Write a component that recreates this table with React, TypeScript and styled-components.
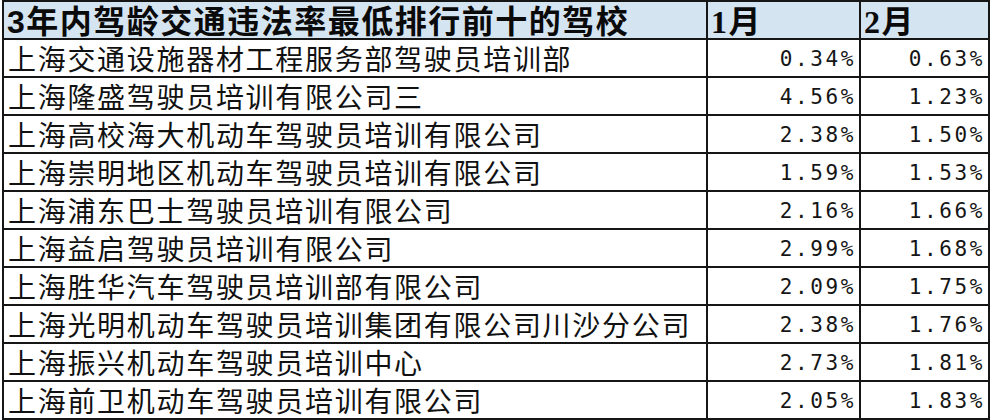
import React from 'react';
import styled, { createGlobalStyle } from 'styled-components';

type Row = { name: string; jan: string; feb: string };

const rows: Row[] = [
  { name: '上海交通设施器材工程服务部驾驶员培训部', jan: '0.34%', feb: '0.63%' },
  { name: '上海隆盛驾驶员培训有限公司三', jan: '4.56%', feb: '1.23%' },
  { name: '上海高校海大机动车驾驶员培训有限公司', jan: '2.38%', feb: '1.50%' },
  { name: '上海崇明地区机动车驾驶员培训有限公司', jan: '1.59%', feb: '1.53%' },
  { name: '上海浦东巴士驾驶员培训有限公司', jan: '2.16%', feb: '1.66%' },
  { name: '上海益启驾驶员培训有限公司', jan: '2.99%', feb: '1.68%' },
  { name: '上海胜华汽车驾驶员培训部有限公司', jan: '2.09%', feb: '1.75%' },
  { name: '上海光明机动车驾驶员培训集团有限公司川沙分公司', jan: '2.38%', feb: '1.76%' },
  { name: '上海振兴机动车驾驶员培训中心', jan: '2.73%', feb: '1.81%' },
  { name: '上海前卫机动车驾驶员培训有限公司', jan: '2.05%', feb: '1.83%' },
];

const App: React.FC = () => {
  return (
    <>
      <GlobalStyle />
      <Sheet>
        <HeadCell>3年内驾龄交通违法率最低排行前十的驾校</HeadCell>
        <HeadCell $serif>1月</HeadCell>
        <HeadCell $serif>2月</HeadCell>
        {rows.map((row) => (
          <React.Fragment key={row.name}>
            <NameCell>{row.name}</NameCell>
            <RateCell>{row.jan}</RateCell>
            <RateCell>{row.feb}</RateCell>
          </React.Fragment>
        ))}
      </Sheet>
    </>
  );
};

export default App;

const GlobalStyle = createGlobalStyle`
  html, body {
    margin: 0;
    padding: 0;
    background: #ffffff;
  }
`;

const Sheet = styled.div`
  display: grid;
  grid-template-columns: 702px 151px 127px;
  grid-auto-rows: 36px;
  gap: 2px;

  width: fit-content;
  margin-left: 2px;
  padding: 2px;

  background: #161616;
`;

const HeadCell = styled.div<{ $serif?: boolean }>`
  display: flex;
  align-items: center;

  padding: 4px 3px 0;

  background: #d5e4f1;
  color: #0a0a0a;
  font-family: ${(p) =>
    p.$serif
      ? '"Liberation Serif", "Noto Sans CJK SC", serif'
      : '"Liberation Sans", "Noto Sans CJK SC", sans-serif'};
  font-size: 32px;
  font-weight: 700;
  line-height: 1;
  letter-spacing: 1.5px;
  white-space: nowrap;
`;

const NameCell = styled.div`
  display: flex;
  align-items: center;

  padding: 0 4px;

  background: #ffffff;
  color: #111111;
  font-family: "Noto Sans CJK SC", sans-serif;
  font-size: 28px;
  line-height: 1;
  letter-spacing: 1.7px;
  white-space: nowrap;
`;

const RateCell = styled.div`
  display: flex;
  align-items: center;
  justify-content: flex-end;

  padding: 3px 3px 0 0;

  background: #ffffff;
  color: #151515;
  font-family: "DejaVu Sans Mono", monospace;
  font-size: 21px;
  line-height: 1;
  letter-spacing: 2.6px;
`;
